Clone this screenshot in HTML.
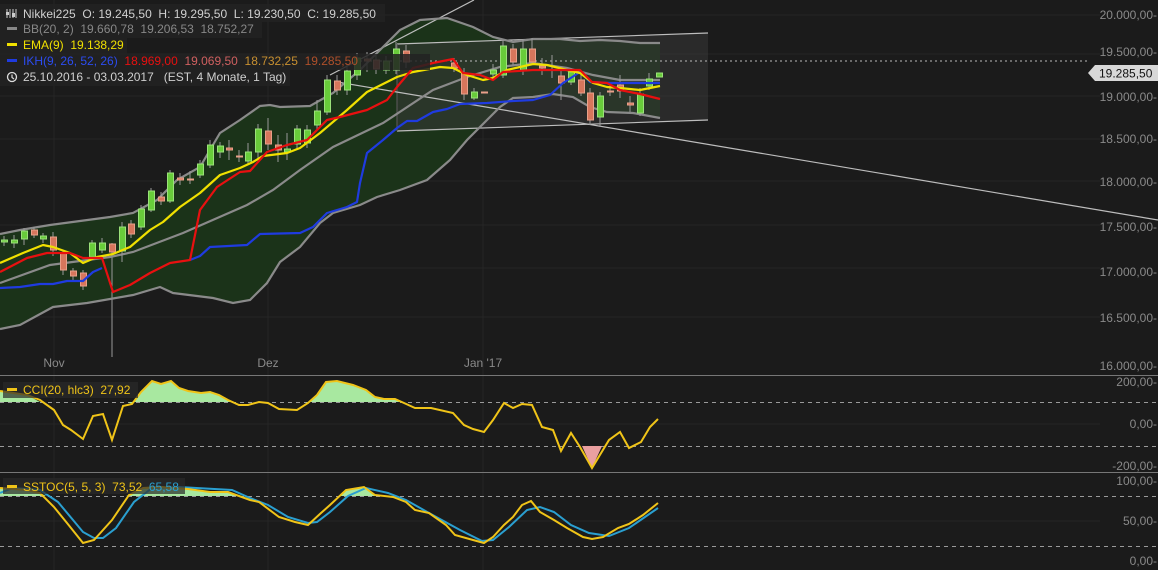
<!DOCTYPE html>
<html><head><meta charset="utf-8"><style>
html,body{margin:0;padding:0;background:#1b1b1b;}
svg{display:block;font-family:"Liberation Sans",sans-serif;}
text{white-space:pre;}
</style></head><body>
<svg width="1158" height="570" viewBox="0 0 1158 570" xmlns="http://www.w3.org/2000/svg" xml:space="preserve">
<rect width="1158" height="570" fill="#1b1b1b"/>
<g stroke="#262626" stroke-width="1">
<line x1="0" y1="15" x2="1100" y2="15"/><line x1="0" y1="54" x2="1100" y2="54"/><line x1="0" y1="96" x2="1100" y2="96"/><line x1="0" y1="139" x2="1100" y2="139"/><line x1="0" y1="181" x2="1100" y2="181"/><line x1="0" y1="225" x2="1100" y2="225"/><line x1="0" y1="268" x2="1100" y2="268"/><line x1="0" y1="317" x2="1100" y2="317"/><line x1="0" y1="424" x2="1100" y2="424"/><line x1="0" y1="521" x2="1100" y2="521"/>
<line x1="54" y1="0" x2="54" y2="570"/><line x1="268" y1="0" x2="268" y2="570"/><line x1="483" y1="0" x2="483" y2="570"/>
</g>
<polygon fill="#1b3319" points="0,234 20,230 50,225 110,217 133,213 157,200 177,180 200,167 220,133 240,120 260,106 270,105 280,107 310,106 333,93 360,70 380,50 400,30 420,20 447,18 473,27 493,37 513,42 533,39 560,39 580,41 600,40 620,41 640,43 660,43 660,118 633,113 607,112 590,107 573,97 553,94 533,97 513,98 500,107 487,120 467,140 450,160 427,180 400,190 377,197 360,205 333,213 320,223 300,247 280,262 267,283 250,300 233,303 213,298 173,293 160,287 133,295 87,303 53,307 20,325 0,329"/>
<polygon fill="#3a3a3a" fill-opacity="0.5" points="397,44 708,33 708,120 397,131"/>
<g stroke="#bdbdbd" stroke-width="1.2" fill="none">
<polyline points="397,44 708,33"/><polyline points="397,131 708,120"/><line x1="397" y1="44" x2="397" y2="131" stroke="#555"/>
<line x1="330" y1="75" x2="474" y2="0"/>
<line x1="337" y1="82" x2="1158" y2="220"/>
</g>
<line x1="360" y1="61" x2="1090" y2="61" stroke="#bbb" stroke-dasharray="2,3"/>
<line x1="112" y1="243" x2="112" y2="357" stroke="#999"/>
<g fill="none" stroke="#8a8a8a" stroke-width="2.2">
<polyline points="0,234 20,230 50,225 110,217 133,213 157,200 177,180 200,167 220,133 240,120 260,106 270,105 280,107 310,106 333,93 360,70 380,50 400,30 420,20 447,18 473,27 493,37 513,42 533,39 560,39 580,41 600,40 620,41 640,43 660,43"/>
<polyline points="0,283 50,265 110,257 133,252 183,233 247,205 273,190 300,170 333,147 383,123 433,90 467,77 500,67 533,63 567,68 593,75 620,80 660,80"/>
<polyline points="0,329 20,325 53,307 87,303 133,295 160,287 173,293 213,298 233,303 250,300 267,283 280,262 300,247 320,223 333,213 360,205 377,197 400,190 427,180 450,160 467,140 487,120 500,107 513,98 533,97 553,94 573,97 590,107 607,112 633,113 660,118"/>
</g>
<g stroke="#999" stroke-width="1">
<line x1="4" y1="236" x2="4" y2="246"/><line x1="14" y1="235" x2="14" y2="248"/><line x1="24" y1="228" x2="24" y2="245"/><line x1="34" y1="227" x2="34" y2="238"/><line x1="43" y1="233" x2="43" y2="243"/><line x1="53" y1="232" x2="53" y2="256"/><line x1="63" y1="250" x2="63" y2="275"/><line x1="73" y1="268" x2="73" y2="280"/><line x1="83" y1="270" x2="83" y2="290"/><line x1="92" y1="240" x2="92" y2="260"/><line x1="102" y1="238" x2="102" y2="253"/><line x1="122" y1="222" x2="122" y2="262"/><line x1="131" y1="220" x2="131" y2="238"/><line x1="141" y1="205" x2="141" y2="230"/><line x1="151" y1="188" x2="151" y2="212"/><line x1="161" y1="192" x2="161" y2="205"/><line x1="170" y1="170" x2="170" y2="203"/><line x1="180" y1="173" x2="180" y2="185"/><line x1="190" y1="171" x2="190" y2="184"/><line x1="200" y1="160" x2="200" y2="178"/><line x1="210" y1="140" x2="210" y2="168"/><line x1="220" y1="142" x2="220" y2="158"/><line x1="229" y1="140" x2="229" y2="160"/><line x1="239" y1="150" x2="239" y2="162"/><line x1="248" y1="143" x2="248" y2="165"/><line x1="258" y1="124" x2="258" y2="158"/><line x1="268" y1="118" x2="268" y2="150"/><line x1="278" y1="135" x2="278" y2="162"/><line x1="287" y1="133" x2="287" y2="160"/><line x1="297" y1="125" x2="297" y2="150"/><line x1="307" y1="125" x2="307" y2="148"/><line x1="317" y1="100" x2="317" y2="130"/><line x1="327" y1="75" x2="327" y2="115"/><line x1="337" y1="75" x2="337" y2="95"/><line x1="347" y1="65" x2="347" y2="95"/><line x1="357" y1="53" x2="357" y2="80"/><line x1="367" y1="52" x2="367" y2="72"/><line x1="376" y1="55" x2="376" y2="74"/><line x1="386" y1="56" x2="386" y2="74"/><line x1="396" y1="42" x2="396" y2="74"/><line x1="406" y1="45" x2="406" y2="68"/><line x1="454" y1="58" x2="454" y2="72"/><line x1="464" y1="68" x2="464" y2="100"/><line x1="474" y1="88" x2="474" y2="100"/><line x1="493" y1="64" x2="493" y2="78"/><line x1="503" y1="40" x2="503" y2="78"/><line x1="513" y1="44" x2="513" y2="65"/><line x1="523" y1="40" x2="523" y2="75"/><line x1="532" y1="38" x2="532" y2="65"/><line x1="542" y1="58" x2="542" y2="75"/><line x1="552" y1="55" x2="552" y2="78"/><line x1="561" y1="70" x2="561" y2="100"/><line x1="571" y1="68" x2="571" y2="85"/><line x1="581" y1="75" x2="581" y2="96"/><line x1="590" y1="88" x2="590" y2="125"/><line x1="600" y1="92" x2="600" y2="127"/><line x1="610" y1="84" x2="610" y2="96"/><line x1="620" y1="75" x2="620" y2="98"/><line x1="630" y1="96" x2="630" y2="112"/><line x1="640" y1="88" x2="640" y2="116"/><line x1="649" y1="73" x2="649" y2="90"/>
</g>
<g fill="#68cc3a" stroke="#9be27a" stroke-width="1">
<rect x="1.5" y="240" width="6" height="2"/><rect x="11.5" y="240" width="6" height="3"/><rect x="21.5" y="231" width="6" height="8"/><rect x="40.5" y="236" width="6" height="3"/><rect x="89.5" y="243" width="6" height="14"/><rect x="99.5" y="243" width="6" height="7"/><rect x="119.5" y="227" width="6" height="24"/><rect x="138.5" y="209" width="6" height="18"/><rect x="148.5" y="191" width="6" height="19"/><rect x="167.5" y="173" width="6" height="28"/><rect x="197.5" y="164" width="6" height="11"/><rect x="207.5" y="145" width="6" height="20"/><rect x="217.5" y="146" width="6" height="6"/><rect x="245.5" y="152" width="6" height="9"/><rect x="255.5" y="129" width="6" height="23"/><rect x="284.5" y="149" width="6" height="3"/><rect x="294.5" y="129" width="6" height="15"/><rect x="304.5" y="130" width="6" height="13"/><rect x="314.5" y="111" width="6" height="14"/><rect x="324.5" y="80" width="6" height="32"/><rect x="344.5" y="71" width="6" height="19"/><rect x="354.5" y="58" width="6" height="17"/><rect x="383.5" y="61" width="6" height="9"/><rect x="393.5" y="49" width="6" height="21"/><rect x="471.5" y="92" width="6" height="6"/><rect x="490.5" y="70" width="6" height="4"/><rect x="500.5" y="46" width="6" height="29"/><rect x="520.5" y="49" width="6" height="21"/><rect x="568.5" y="72" width="6" height="10"/><rect x="597.5" y="96" width="6" height="21"/><rect x="637.5" y="94" width="6" height="19"/><rect x="646.5" y="79" width="6" height="7"/><rect x="656.5" y="73" width="6" height="4"/>
</g>
<g fill="#d7765c" stroke="#e8a08a" stroke-width="1">
<rect x="31.5" y="230" width="6" height="5"/><rect x="50.5" y="237" width="6" height="13"/><rect x="60.5" y="253" width="6" height="17"/><rect x="70.5" y="271" width="6" height="5"/><rect x="80.5" y="273" width="6" height="13"/><rect x="109.5" y="244" width="6" height="8"/><rect x="128.5" y="224" width="6" height="10"/><rect x="158.5" y="197" width="6" height="4"/><rect x="177.5" y="178" width="6" height="2"/><rect x="187.5" y="179" width="6" height="1"/><rect x="226.5" y="148" width="6" height="2"/><rect x="236.5" y="156" width="6" height="1"/><rect x="265.5" y="131" width="6" height="13"/><rect x="275.5" y="145" width="6" height="5"/><rect x="334.5" y="81" width="6" height="9"/><rect x="364.5" y="59" width="6" height="2"/><rect x="373.5" y="60" width="6" height="9"/><rect x="403.5" y="51" width="6" height="11"/><rect x="451.5" y="63" width="6" height="5"/><rect x="461.5" y="73" width="6" height="21"/><rect x="481.5" y="92" width="6" height="1"/><rect x="510.5" y="49" width="6" height="13"/><rect x="529.5" y="49" width="6" height="13"/><rect x="539.5" y="66" width="6" height="2"/><rect x="558.5" y="76" width="6" height="7"/><rect x="578.5" y="80" width="6" height="13"/><rect x="587.5" y="93" width="6" height="27"/><rect x="607.5" y="91" width="6" height="1"/><rect x="617.5" y="85" width="6" height="6"/><rect x="627.5" y="103" width="6" height="2"/>
</g>
<g fill="none" stroke-width="2.2" stroke-linejoin="round">
<polyline stroke="#1f3be0" points="0,288 20,287 40,284 53,284 67,281 83,281 93,272 102,268"/>
<polyline stroke="#1f3be0" points="190,260 200,256 210,247 247,245 260,234 300,233 313,227 327,213 347,207 357,202 360,183 367,153 383,140 397,128 407,121 417,121 433,112 447,109 460,104 487,103 513,101 533,100 550,95 563,83 580,72 590,82 610,83 633,83 660,83"/>
<polyline stroke="#f0e000" points="0,263 23,253 43,245 53,247 70,253 83,263 97,257 113,254 130,247 150,230 163,222 180,207 200,193 220,175 240,168 253,162 263,156 287,153 300,148 320,133 347,110 367,92 397,77 413,72 440,67 453,68 467,75 483,80 493,78 507,70 533,64 547,65 567,70 580,73 593,83 607,87 620,88 640,90 660,86"/>
<polyline stroke="#e81010" points="0,272 27,258 47,253 70,253 83,258 102,258 113,292 130,285 150,273 170,263 190,260 200,210 217,187 240,172 250,171 267,152 287,145 307,140 327,120 340,117 367,110 387,100 397,87 413,68 433,63 453,59 463,73 480,75 493,80 503,72 533,70 560,70 580,70 592,82 607,83 620,90 640,94 660,99"/>
</g>
<line x1="0" y1="375.5" x2="1158" y2="375.5" stroke="#777"/>
<line x1="0" y1="472.5" x2="1158" y2="472.5" stroke="#777"/>
<g stroke="#9a9a9a" stroke-dasharray="4,4"><line x1="0" y1="402.5" x2="1158" y2="402.5"/><line x1="0" y1="446.5" x2="1158" y2="446.5"/><line x1="0" y1="496.5" x2="1158" y2="496.5"/><line x1="0" y1="546.5" x2="1158" y2="546.5"/></g>
<polygon fill="#a8e8a0" points="0,391 27,395 40,402 0,402"/>
<polygon fill="#a8e8a0" points="128,402 132,404 141,392 152,381 161,384 171,381 179,388 188,391 201,393 210,392 219,395 228,400 232,402"/>
<polygon fill="#a8e8a0" points="305,402 308,403 317,395 326,382 337,381 353,385 366,390 375,397 384,399 395,399 400,402"/>
<polygon fill="#eaa0a0" points="582,446 592,468 602,446"/>
<polyline fill="none" stroke="#f0c418" stroke-width="2" points="0,391 27,395 40,400 54,410 63,425 71,430 83,439 93,416 103,414 112,440 123,406 132,404 141,392 152,381 161,384 171,381 179,388 188,391 201,393 210,392 219,395 228,400 239,405 248,405 259,402 268,403 279,409 297,410 308,403 317,395 326,382 337,381 353,385 366,390 375,397 384,399 395,399 404,403 415,408 431,408 453,413 464,425 473,429 484,432 493,420 504,403 513,408 522,404 532,405 542,427 553,430 561,451 571,433 580,447 592,468 609,440 620,432 629,448 641,442 650,427 658,419"/>
<polygon fill="#a8e8a0" points="0,488 27,490 40,493 46,496 0,496"/>
<polygon fill="#a8e8a0" points="126,496 129,495 143,488 161,487 188,489 210,492 228,492 240,496"/>
<polygon fill="#a8e8a0" points="339,496 346,490 364,487 375,495 378,496"/>
<polyline fill="none" stroke="#2a9fd0" stroke-width="2" points="0,493 13,488 40,490 58,502 83,532 94,538 103,538 116,528 134,502 152,488 179,487 232,490 250,498 268,505 288,517 308,523 317,522 330,512 348,496 366,488 388,493 406,500 429,513 460,530 482,541 493,540 509,527 527,510 540,507 554,512 571,525 589,533 609,536 629,528 658,508"/>
<polyline fill="none" stroke="#f0c418" stroke-width="2" points="0,488 27,490 40,493 54,507 67,523 83,543 94,540 112,520 129,495 143,488 161,487 188,489 210,492 228,492 250,500 259,502 279,517 295,522 308,525 321,513 330,505 346,490 364,487 375,495 393,497 406,502 415,510 429,513 446,525 455,535 473,540 484,543 493,537 504,525 513,517 522,505 531,501 540,512 554,520 567,528 583,537 592,539 603,537 618,528 629,524 643,515 658,503"/>
<g fill="#8a8a8a" font-size="12" text-anchor="end">
<text x="1157" y="19">20.000,00-</text><text x="1157" y="56">19.500,00-</text><text x="1157" y="101">19.000,00-</text><text x="1157" y="143">18.500,00-</text><text x="1157" y="186">18.000,00-</text><text x="1157" y="231">17.500,00-</text><text x="1157" y="276">17.000,00-</text><text x="1157" y="322">16.500,00-</text><text x="1157" y="370">16.000,00-</text>
<text x="1157" y="386">200,00-</text><text x="1157" y="428">0,00-</text><text x="1157" y="470">-200,00-</text>
<text x="1157" y="485">100,00-</text><text x="1157" y="525">50,00-</text><text x="1157" y="565">0,00-</text>
</g>
<g fill="#8a8a8a" font-size="12" text-anchor="middle"><text x="54" y="367">Nov</text><text x="268" y="367">Dez</text><text x="483" y="367">Jan '17</text></g>
<polygon fill="#d8d8d8" points="1088,73 1095,65 1158,65 1158,81 1095,81"/>
<text x="1099" y="77.5" font-size="12" fill="#111">19.285,50</text>
<g font-size="12">
<rect x="0" y="4" width="385" height="18" fill="#222" fill-opacity="0.85"/>
<rect x="0" y="22" width="262" height="16" fill="#222" fill-opacity="0.85"/>
<rect x="0" y="38" width="127" height="16" fill="#222" fill-opacity="0.85"/>
<rect x="0" y="54" width="430" height="16" fill="#222" fill-opacity="0.85"/>
<rect x="0" y="70" width="290" height="16" fill="#222" fill-opacity="0.85"/>
<g stroke="#ccc" stroke-width="1"><line x1="7" y1="9" x2="7" y2="18"/><line x1="10" y1="9" x2="10" y2="18"/><line x1="13" y1="9" x2="13" y2="18"/><line x1="16" y1="9" x2="16" y2="18"/></g>
<g fill="#ccc"><rect x="6" y="12" width="3" height="3"/><rect x="12" y="13" width="3" height="4"/></g>
<text x="23" y="18" fill="#d0d0d0">Nikkei225  O: 19.245,50  H: 19.295,50  L: 19.230,50  C: 19.285,50</text>
<rect x="7" y="27" width="10" height="3" fill="#888"/>
<text x="23" y="33" fill="#888">BB(20, 2)  19.660,78  19.206,53  18.752,27</text>
<rect x="7" y="43" width="10" height="3" fill="#f0e000"/>
<text x="23" y="49" fill="#f0e000">EMA(9)  19.138,29</text>
<rect x="7" y="59" width="10" height="3" fill="#1f3be0"/>
<text x="23" y="65" fill="#2c4cf0">IKH(9, 26, 52, 26)  <tspan fill="#e81010">18.969,00</tspan>  <tspan fill="#d06060">19.069,50</tspan>  <tspan fill="#c89030">18.732,25</tspan>  <tspan fill="#b0502a">19.285,50</tspan></text>
<circle cx="12" cy="77" r="4.5" fill="none" stroke="#ddd" stroke-width="1.3"/><path d="M12 74.5V77.5L14 79" fill="none" stroke="#ddd" stroke-width="1.2"/>
<text x="23" y="81" fill="#d0d0d0">25.10.2016 - 03.03.2017   (EST, 4 Monate, 1 Tag)</text>
<rect x="3" y="382" width="135" height="16" fill="#2a2a2a" fill-opacity="0.7"/>
<rect x="7" y="388" width="10" height="3" fill="#f0c418"/>
<text x="23" y="394" fill="#f0c418">CCI(20, hlc3)  27,92</text>
<rect x="3" y="478" width="182" height="16" fill="#2a2a2a" fill-opacity="0.7"/>
<rect x="7" y="485" width="10" height="3" fill="#f0c418"/>
<text x="23" y="491" fill="#f0c418">SSTOC(5, 5, 3)  73,52  <tspan fill="#2a9fd0">65,58</tspan></text>
</g>
</svg>
</body></html>
